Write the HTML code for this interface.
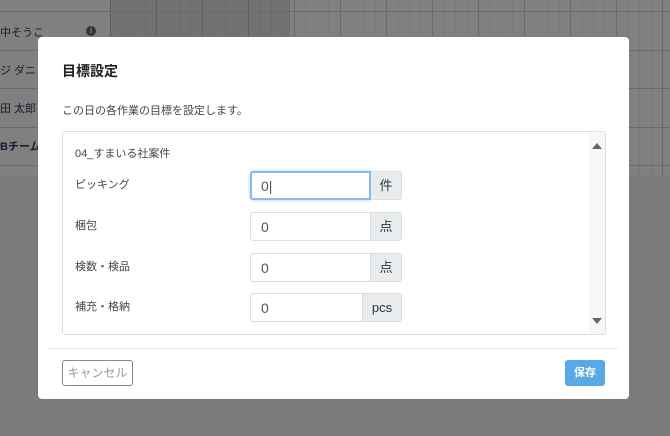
<!DOCTYPE html>
<html><head><meta charset="utf-8"><style>
*{box-sizing:border-box;margin:0;padding:0}
body{width:670px;height:436px;overflow:hidden;position:relative;background:#7b7b7b;font-family:"Liberation Sans","Noto Sans CJK JP",sans-serif}
.bg{position:absolute;left:0;top:0;width:670px;height:175px;background:#808080}
.grid{position:absolute;left:110px;top:0;width:560px;height:175px;
background-image:linear-gradient(90deg,rgba(0,0,0,.12) 1px,transparent 1px),linear-gradient(90deg,rgba(0,0,0,.05) 1px,transparent 1px);
background-size:46px 100%,11.5px 100%}
.dark{position:absolute;left:110px;top:0;width:180px;height:50px;background:#727272}
.hl{position:absolute;left:0;width:670px;height:1px;background:#6a6a6a}
.nm{position:absolute;font-size:11px;color:#1a1a2a}
.modal{position:absolute;left:38px;top:37px;width:591px;height:362px;background:#fff;border-radius:4px}
.t{position:absolute;left:24px;top:24px;font-size:14px;font-weight:bold;color:#222}
.d{position:absolute;left:24px;top:65px;font-size:11px;color:#444}
.box{position:absolute;left:24px;top:94px;width:544px;height:204px;border:1px solid #ddd;border-radius:3px}
.sb{position:absolute;right:0;top:0;width:16px;height:100%;background:#f8f8f8}
.h{position:absolute;left:12px;top:13px;font-size:11px;color:#444}
.lb{position:absolute;left:12px;font-size:11px;color:#444}
.in{position:absolute;left:187px;width:121px;height:29px;border:1px solid #ddd;border-radius:3px 0 0 3px;font-size:14px;color:#555;padding:6px 10px;background:#fff}
.ad{position:absolute;width:31px;height:29px;background:#e9ecef;border:1px solid #ddd;border-left:none;border-radius:0 3px 3px 0;font-size:13px;color:#333;text-align:center;line-height:27px}
.hr{position:absolute;left:11px;top:311px;width:569px;height:1px;background:#e5e5e5}
.c{position:absolute;left:24px;top:323px;width:71px;height:26px;border:1px solid #888;border-radius:3px;font-size:12px;color:#999;text-align:center;line-height:24px}
.s{position:absolute;left:527px;top:323px;width:40px;height:26px;background:#5aa9e6;border-radius:3px;color:#fff;font-size:11px;font-weight:bold;text-align:center;line-height:26px}
</style></head><body>
<div class="bg"></div><div class="dark"></div><div class="grid"></div>
<div class="hl" style="top:11px"></div><div class="hl" style="top:50px"></div><div class="hl" style="top:88px"></div><div class="hl" style="top:127px"></div><div class="hl" style="top:165px"></div>
<div class="nm" style="left:0;top:24px">中そうこ</div>
<div style="position:absolute;left:86px;top:26px;width:10px;height:10px;border-radius:50%;background:#333;color:#888;font-size:8px;text-align:center;line-height:10px;font-weight:bold">i</div>
<div class="nm" style="left:0;top:62px">ジ ダニ</div>
<div class="nm" style="left:0;top:100px">田 太郎</div>
<div class="nm" style="left:0;top:138px;font-weight:bold">Bチーム</div>
<div class="modal">
<div class="t">目標設定</div>
<div class="d">この日の各作業の目標を設定します。</div>
<div class="box">
<div class="sb"><div style="position:absolute;left:3px;top:11px;border:5px solid transparent;border-bottom:6px solid #666;border-top:none"></div><div style="position:absolute;left:3px;top:186px;border:5px solid transparent;border-top:6px solid #666;border-bottom:none"></div></div>
<div class="h">04_すまいる社案件</div>
<div class="lb" style="top:44px">ピッキング</div>
<div class="in" style="top:39px;border:2px solid #8ab8f0;box-shadow:0 0 3px #a8ccf5;padding:5px 9px">0|</div><div class="ad" style="left:308px;top:39px">件</div>
<div class="lb" style="top:85px">梱包</div>
<div class="in" style="top:80px">0</div><div class="ad" style="left:308px;top:80px">点</div>
<div class="lb" style="top:126px">検数・検品</div>
<div class="in" style="top:121px">0</div><div class="ad" style="left:308px;top:121px">点</div>
<div class="lb" style="top:166px">補充・格納</div>
<div class="in" style="top:161px;width:113px">0</div><div class="ad" style="left:300px;top:161px;width:39px">pcs</div>
</div>
<div class="hr"></div>
<div class="c">キャンセル</div>
<div class="s">保存</div>
</div>
</body></html>
